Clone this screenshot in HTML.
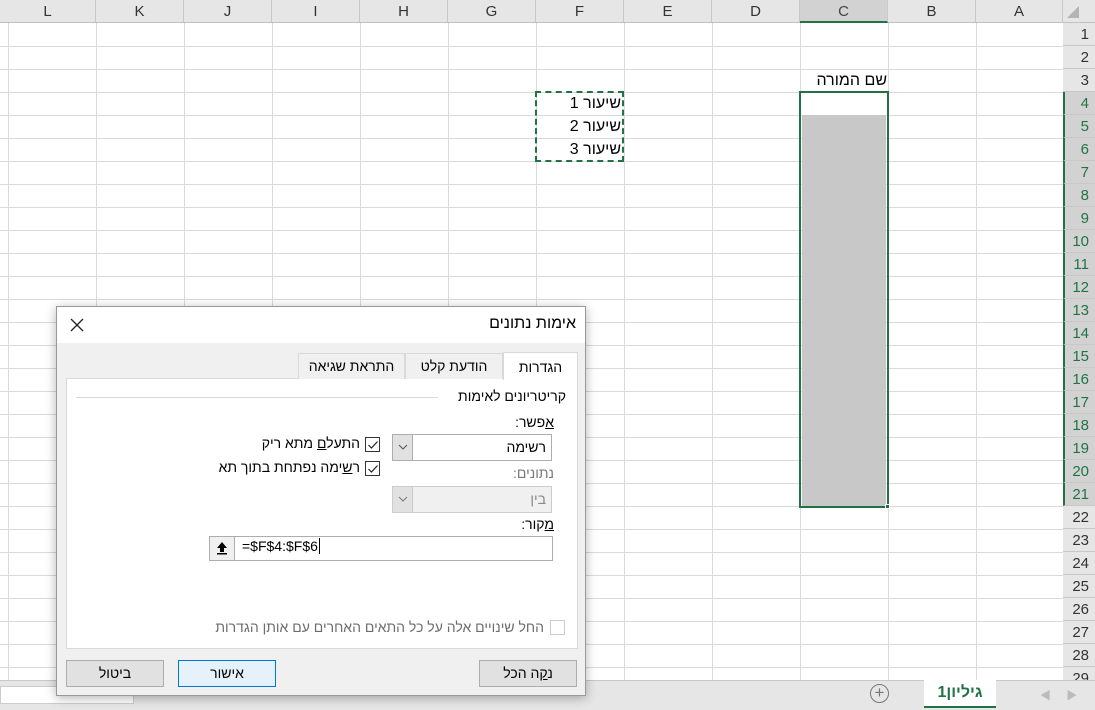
<!DOCTYPE html>
<html><head><meta charset="utf-8"><style>
*{margin:0;padding:0;box-sizing:border-box}
body{width:1095px;height:710px;overflow:hidden;background:#fff;font-family:"Liberation Sans","Noto Sans CJK SC",sans-serif;position:relative}
.a{position:absolute}
.ch{position:absolute;top:0;height:23px;border-right:1px solid #c8c8c8;background:#e6e6e6;text-align:center;font-size:15px;line-height:23px;color:#333;border-bottom:1px solid #c0c0c0}
.rh{position:absolute;left:1063px;width:32px;height:23px;border-bottom:1px solid #c8c8c8;background:#e6e6e6;text-align:right;padding-right:6px;font-size:15px;line-height:23px;color:#333}
.he{font-family:"Liberation Sans","Noto Sans CJK SC",sans-serif;direction:rtl}
.btn{position:absolute;height:27px;border:1px solid #adadad;background:#e1e1e1;font-size:14px;text-align:center;line-height:25px;direction:rtl}
.cb{position:absolute;width:15px;height:15px;border:1px solid #333;background:#fff}
.sel{background:#d2d2d2;color:#217346;border-left:2px solid #217346}
</style></head><body>
<svg class="a" style="left:0;top:0" width="1095" height="710">
<g stroke="#dadada" stroke-width="1">
<line x1="8.5" y1="0" x2="8.5" y2="680"/><line x1="96.5" y1="0" x2="96.5" y2="680"/><line x1="184.5" y1="0" x2="184.5" y2="680"/><line x1="272.5" y1="0" x2="272.5" y2="680"/><line x1="360.5" y1="0" x2="360.5" y2="680"/><line x1="448.5" y1="0" x2="448.5" y2="680"/><line x1="536.5" y1="0" x2="536.5" y2="680"/><line x1="624.5" y1="0" x2="624.5" y2="680"/><line x1="712.5" y1="0" x2="712.5" y2="680"/><line x1="800.5" y1="0" x2="800.5" y2="680"/><line x1="888.5" y1="0" x2="888.5" y2="680"/><line x1="976.5" y1="0" x2="976.5" y2="680"/>
<line x1="0" y1="46.5" x2="1063" y2="46.5"/><line x1="0" y1="69.5" x2="1063" y2="69.5"/><line x1="0" y1="92.5" x2="1063" y2="92.5"/><line x1="0" y1="115.5" x2="1063" y2="115.5"/><line x1="0" y1="138.5" x2="1063" y2="138.5"/><line x1="0" y1="161.5" x2="1063" y2="161.5"/><line x1="0" y1="184.5" x2="1063" y2="184.5"/><line x1="0" y1="207.5" x2="1063" y2="207.5"/><line x1="0" y1="230.5" x2="1063" y2="230.5"/><line x1="0" y1="253.5" x2="1063" y2="253.5"/><line x1="0" y1="276.5" x2="1063" y2="276.5"/><line x1="0" y1="299.5" x2="1063" y2="299.5"/><line x1="0" y1="322.5" x2="1063" y2="322.5"/><line x1="0" y1="345.5" x2="1063" y2="345.5"/><line x1="0" y1="368.5" x2="1063" y2="368.5"/><line x1="0" y1="391.5" x2="1063" y2="391.5"/><line x1="0" y1="414.5" x2="1063" y2="414.5"/><line x1="0" y1="437.5" x2="1063" y2="437.5"/><line x1="0" y1="460.5" x2="1063" y2="460.5"/><line x1="0" y1="483.5" x2="1063" y2="483.5"/><line x1="0" y1="506.5" x2="1063" y2="506.5"/><line x1="0" y1="529.5" x2="1063" y2="529.5"/><line x1="0" y1="552.5" x2="1063" y2="552.5"/><line x1="0" y1="575.5" x2="1063" y2="575.5"/><line x1="0" y1="598.5" x2="1063" y2="598.5"/><line x1="0" y1="621.5" x2="1063" y2="621.5"/><line x1="0" y1="644.5" x2="1063" y2="644.5"/><line x1="0" y1="667.5" x2="1063" y2="667.5"/>
</g>
</svg>
<div class="ch" style="left:0;width:96px">L</div>
<div class="ch" style="left:96px;width:88px">K</div>
<div class="ch" style="left:184px;width:88px">J</div>
<div class="ch" style="left:272px;width:88px">I</div>
<div class="ch" style="left:360px;width:88px">H</div>
<div class="ch" style="left:448px;width:88px">G</div>
<div class="ch" style="left:536px;width:88px">F</div>
<div class="ch" style="left:624px;width:88px">E</div>
<div class="ch" style="left:712px;width:88px">D</div>
<div class="ch" style="left:800px;width:88px;background:#d2d2d2;border-bottom:2px solid #217346;color:#444">C</div>
<div class="ch" style="left:888px;width:88px">B</div>
<div class="ch" style="left:976px;width:87px">A</div>
<div class="a" style="left:1063px;top:0;width:32px;height:23px;background:#e6e6e6;border-bottom:1px solid #c0c0c0"></div>
<svg class="a" style="left:1066px;top:5px" width="14" height="14"><polygon points="13,1 13,13 1,13" fill="#b4b4b4"/></svg>
<div class="rh" style="top:23px">1</div><div class="rh" style="top:46px">2</div><div class="rh" style="top:69px">3</div>
<div class="rh sel" style="top:92px">4</div><div class="rh sel" style="top:115px">5</div><div class="rh sel" style="top:138px">6</div><div class="rh sel" style="top:161px">7</div><div class="rh sel" style="top:184px">8</div><div class="rh sel" style="top:207px">9</div><div class="rh sel" style="top:230px">10</div><div class="rh sel" style="top:253px">11</div><div class="rh sel" style="top:276px">12</div><div class="rh sel" style="top:299px">13</div><div class="rh sel" style="top:322px">14</div><div class="rh sel" style="top:345px">15</div><div class="rh sel" style="top:368px">16</div><div class="rh sel" style="top:391px">17</div><div class="rh sel" style="top:414px">18</div><div class="rh sel" style="top:437px">19</div><div class="rh sel" style="top:460px">20</div><div class="rh sel" style="top:483px">21</div>
<div class="rh" style="top:506px">22</div><div class="rh" style="top:529px">23</div><div class="rh" style="top:552px">24</div><div class="rh" style="top:575px">25</div><div class="rh" style="top:598px">26</div><div class="rh" style="top:621px">27</div><div class="rh" style="top:644px">28</div><div class="rh" style="top:667px">29</div>
<div class="a he" style="left:770px;top:70px;width:117px;font-size:16px;text-align:right;line-height:22px">שם המורה</div>
<div class="a" style="left:802px;top:115px;width:84px;height:391px;background:#c8c8c8"></div>
<div class="a" style="left:799px;top:91px;width:90px;height:417px;border:2px solid #217346"></div>
<div class="a" style="left:885px;top:504px;width:5px;height:5px;background:#217346;border:1px solid #fff"></div>
<div class="a" style="left:535px;top:91px;width:89px;height:71px;border:2px dashed #217346"></div>
<div class="a he" style="left:540px;top:92px;width:81px;font-size:16px;text-align:right;line-height:23px">שיעור 1<br>שיעור 2<br>שיעור 3</div>
<div class="a" style="left:0;top:680px;width:1095px;height:30px;background:#e6e6e6;border-top:1px solid #c8c8c8"></div>
<div class="a" style="left:924px;top:680px;width:72px;height:28px;background:#fff;border-bottom:2px solid #217346;color:#217346;font-weight:bold;font-size:16px;text-align:center;line-height:26px" dir="rtl">גיליון1</div>
<div class="a" style="left:870px;top:684px;width:19px;height:19px;border:1px solid #777;border-radius:50%;text-align:center;line-height:16px;color:#777;font-size:17px">+</div>
<div class="a" style="left:1040px;top:687px;color:#bbb;font-size:11px">◀&nbsp;&nbsp;&nbsp;&nbsp;&nbsp;▶</div>
<div class="a" style="left:0;top:686px;width:134px;height:18px;background:#fff;border:1px solid #ccc"></div>
<div class="a" style="left:56px;top:306px;width:530px;height:390px;background:#f0f0f0;border:1px solid #999;box-shadow:0 2px 10px rgba(0,0,0,.3)"></div>
<div class="a" style="left:57px;top:307px;width:528px;height:36px;background:#fff"></div>
<div class="a he" style="left:300px;top:315px;width:276px;font-size:16px;text-align:right">אימות נתונים</div>
<svg class="a" style="left:70px;top:318px" width="14" height="14"><path d="M1 1L13 13M13 1L1 13" stroke="#222" stroke-width="1.3"/></svg>
<div class="a" style="left:66px;top:378px;width:512px;height:271px;background:#fff;border:1px solid #d9d9d9"></div>
<div class="a he" style="left:298px;top:353px;width:107px;height:26px;border:1px solid #d9d9d9;border-bottom:none;background:#f0f0f0;font-size:14px;text-align:center;line-height:24px">התראת שגיאה</div>
<div class="a he" style="left:405px;top:353px;width:98px;height:26px;border:1px solid #d9d9d9;border-bottom:none;background:#f0f0f0;font-size:14px;text-align:center;line-height:24px">הודעת קלט</div>
<div class="a he" style="left:503px;top:352px;width:75px;height:28px;border:1px solid #d9d9d9;border-bottom:none;background:#fff;font-size:14px;text-align:center;line-height:28px">הגדרות</div>
<div class="a" style="left:76px;top:397px;width:362px;height:1px;background:#d9d9d9"></div>
<div class="a he" style="left:430px;top:388px;width:136px;font-size:14px;text-align:right">קריטריונים לאימות</div>
<div class="a he" style="left:450px;top:414px;width:104px;font-size:14px;text-align:right"><u>א</u>פשר:</div>
<div class="a" style="left:392px;top:434px;width:160px;height:27px;border:1px solid #adadad;background:#fff"></div>
<div class="a" style="left:393px;top:435px;width:20px;height:25px;background:#e1e1e1;border-right:1px solid #adadad"></div>
<svg class="a" style="left:398px;top:444px" width="10" height="6"><path d="M1 1L5 5L9 1" stroke="#555" fill="none"/></svg>
<div class="a he" style="left:420px;top:439px;width:126px;font-size:14px;text-align:right">רשימה</div>
<div class="a he" style="left:450px;top:465px;width:104px;font-size:14px;text-align:right;color:#777">נתונים:</div>
<div class="a" style="left:392px;top:486px;width:160px;height:27px;border:1px solid #ccc;background:#f0f0f0"></div>
<div class="a" style="left:393px;top:487px;width:20px;height:25px;background:#e1e1e1;border-right:1px solid #ccc"></div>
<svg class="a" style="left:398px;top:496px" width="10" height="6"><path d="M1 1L5 5L9 1" stroke="#777" fill="none"/></svg>
<div class="a he" style="left:420px;top:491px;width:126px;font-size:14px;text-align:right;color:#888">בין</div>
<div class="cb" style="left:365px;top:437px"></div>
<svg class="a" style="left:367px;top:439px" width="12" height="12"><path d="M1.5 6L4.5 9L10.5 2.5" stroke="#222" fill="none" stroke-width="1.2"/></svg>
<div class="a he" style="left:190px;top:435px;width:170px;font-size:14px;text-align:right">התעל<u>ם</u> מתא ריק</div>
<div class="cb" style="left:365px;top:461px"></div>
<svg class="a" style="left:367px;top:463px" width="12" height="12"><path d="M1.5 6L4.5 9L10.5 2.5" stroke="#222" fill="none" stroke-width="1.2"/></svg>
<div class="a he" style="left:140px;top:459px;width:220px;font-size:14px;text-align:right">ר<u>ש</u>ימה נפתחת בתוך תא</div>
<div class="a he" style="left:450px;top:516px;width:104px;font-size:14px;text-align:right"><u>מ</u>קור:</div>
<div class="a" style="left:209px;top:536px;width:344px;height:25px;border:1px solid #adadad;background:#fff"></div>
<div class="a" style="left:210px;top:537px;width:25px;height:23px;background:#f0f0f0;border-right:1px solid #adadad"></div>
<svg class="a" style="left:215px;top:541px" width="14" height="14"><path d="M7 1L12 7H9V11H5V7H2Z" fill="#000"/><rect x="2" y="12" width="10" height="1.5" fill="#000"/></svg>
<div class="a" style="left:242px;top:538px;font-size:14px">=$F$4:$F$6<span style="border-left:1px solid #000;margin-left:1px"></span></div>
<div class="cb" style="left:550px;top:620px;border-color:#ccc"></div>
<div class="a he" style="left:160px;top:619px;width:384px;font-size:14px;text-align:right;color:#6d6d6d">החל שינויים אלה על כל התאים האחרים עם אותן הגדרות</div>
<div class="btn" style="left:66px;top:660px;width:98px">ביטול</div>
<div class="btn" style="left:178px;top:660px;width:98px;border-color:#0078d7;background:#e5f1fb">אישור</div>
<div class="btn" style="left:479px;top:660px;width:98px">נ<u>ק</u>ה הכל</div>
</body></html>
